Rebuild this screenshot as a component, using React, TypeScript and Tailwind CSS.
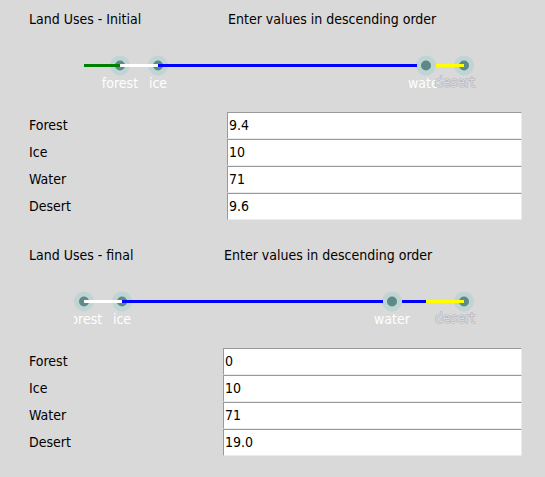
import { useState } from "react";

type Handle = { at: number; name: string; ghost?: boolean };
type Segment = { from: number; to: number; color: string };
type Field = { name: string; value: string };

type PanelProps = {
  id: string;
  title: string;
  columns: string;
  handles: Handle[];
  segments: Segment[];
  fields: Field[];
};

function Track({ handles, segments, title }: { handles: Handle[]; segments: Segment[]; title: string }) {
  return (
    <svg width="402" height="50" viewBox="0 0 402 50" role="img" aria-label={title} className="block overflow-hidden">
      {handles.map((h) => (
        <g key={h.name}>
          <circle cx={h.at} cy="15.5" r="10" fill="#c0d5d3" />
          <circle cx={h.at} cy="15.5" r="5" fill="#5c8a89" />
        </g>
      ))}
      {segments.map((s) => (
        <rect key={s.from} x={s.from} y="14" width={s.to - s.from} height="3" fill={s.color} />
      ))}
      {handles.map((h) =>
        h.ghost ? (
          <text
            key={h.name}
            x="401"
            y="37"
            textAnchor="end"
            className="fill-[#dcdcdc] stroke-[#aeaebc] [stroke-width:1px] [paint-order:stroke]"
          >
            {h.name}
          </text>
        ) : (
          <text key={h.name} x={h.at} y="38" textAnchor="middle" className="fill-white">
            {h.name}
          </text>
        ),
      )}
    </svg>
  );
}

function Panel({ id, title, columns, handles, segments, fields }: PanelProps) {
  const [values, setValues] = useState(fields.map((f) => f.value));
  return (
    <section className="pb-4">
      <div className={`grid ${columns} h-[38px] items-center`}>
        <h2>{title}</h2>
        <p className="pl-px">Enter values in descending order</p>
      </div>
      <div className="flex justify-center pt-3 pr-0.5">
        <Track handles={handles} segments={segments} title={title} />
      </div>
      <div className="pt-3">
        {fields.map((f, i) => (
          <div key={f.name} className={`grid ${columns} h-[27px]`}>
            <label htmlFor={`${id}-${f.name}`} className="leading-[26px]">
              {f.name}
            </label>
            <input
              id={`${id}-${f.name}`}
              value={values[i]}
              onChange={(e) => setValues(values.map((v, j) => (j === i ? e.target.value : v)))}
              className="h-[27px] w-full min-w-0 border border-t-[#999999] border-r-[#ebebeb] border-b-[#ebebeb] border-l-[#999999] bg-white px-px pb-px outline-none"
            />
          </div>
        ))}
      </div>
    </section>
  );
}

export default function App() {
  return (
    <main className="min-h-screen bg-[#d9d9d9] pr-[23px] pl-[29px] font-['DejaVu_Sans_Condensed','DejaVu_Sans',sans-serif] text-[14px] leading-[18px] text-black">
      <Panel
        id="initial"
        title="Land Uses - Initial"
        columns="grid-cols-[198px_1fr]"
        handles={[
          { at: 46, name: "forest" },
          { at: 84, name: "ice" },
          { at: 352, name: "water" },
          { at: 390, name: "desert", ghost: true },
        ]}
        segments={[
          { from: 10, to: 46, color: "#008000" },
          { from: 46, to: 84, color: "#ffffff" },
          { from: 84, to: 343, color: "#0000ff" },
          { from: 362, to: 390, color: "#ffff00" },
        ]}
        fields={[
          { name: "Forest", value: "9.4" },
          { name: "Ice", value: "10" },
          { name: "Water", value: "71" },
          { name: "Desert", value: "9.6" },
        ]}
      />
      <Panel
        id="final"
        title="Land Uses - final"
        columns="grid-cols-[194px_1fr]"
        handles={[
          { at: 10, name: "forest" },
          { at: 48, name: "ice" },
          { at: 318, name: "water" },
          { at: 390, name: "desert", ghost: true },
        ]}
        segments={[
          { from: 10, to: 48, color: "#ffffff" },
          { from: 48, to: 309, color: "#0000ff" },
          { from: 328, to: 352, color: "#0000ff" },
          { from: 352, to: 390, color: "#ffff00" },
        ]}
        fields={[
          { name: "Forest", value: "0" },
          { name: "Ice", value: "10" },
          { name: "Water", value: "71" },
          { name: "Desert", value: "19.0" },
        ]}
      />
    </main>
  );
}
